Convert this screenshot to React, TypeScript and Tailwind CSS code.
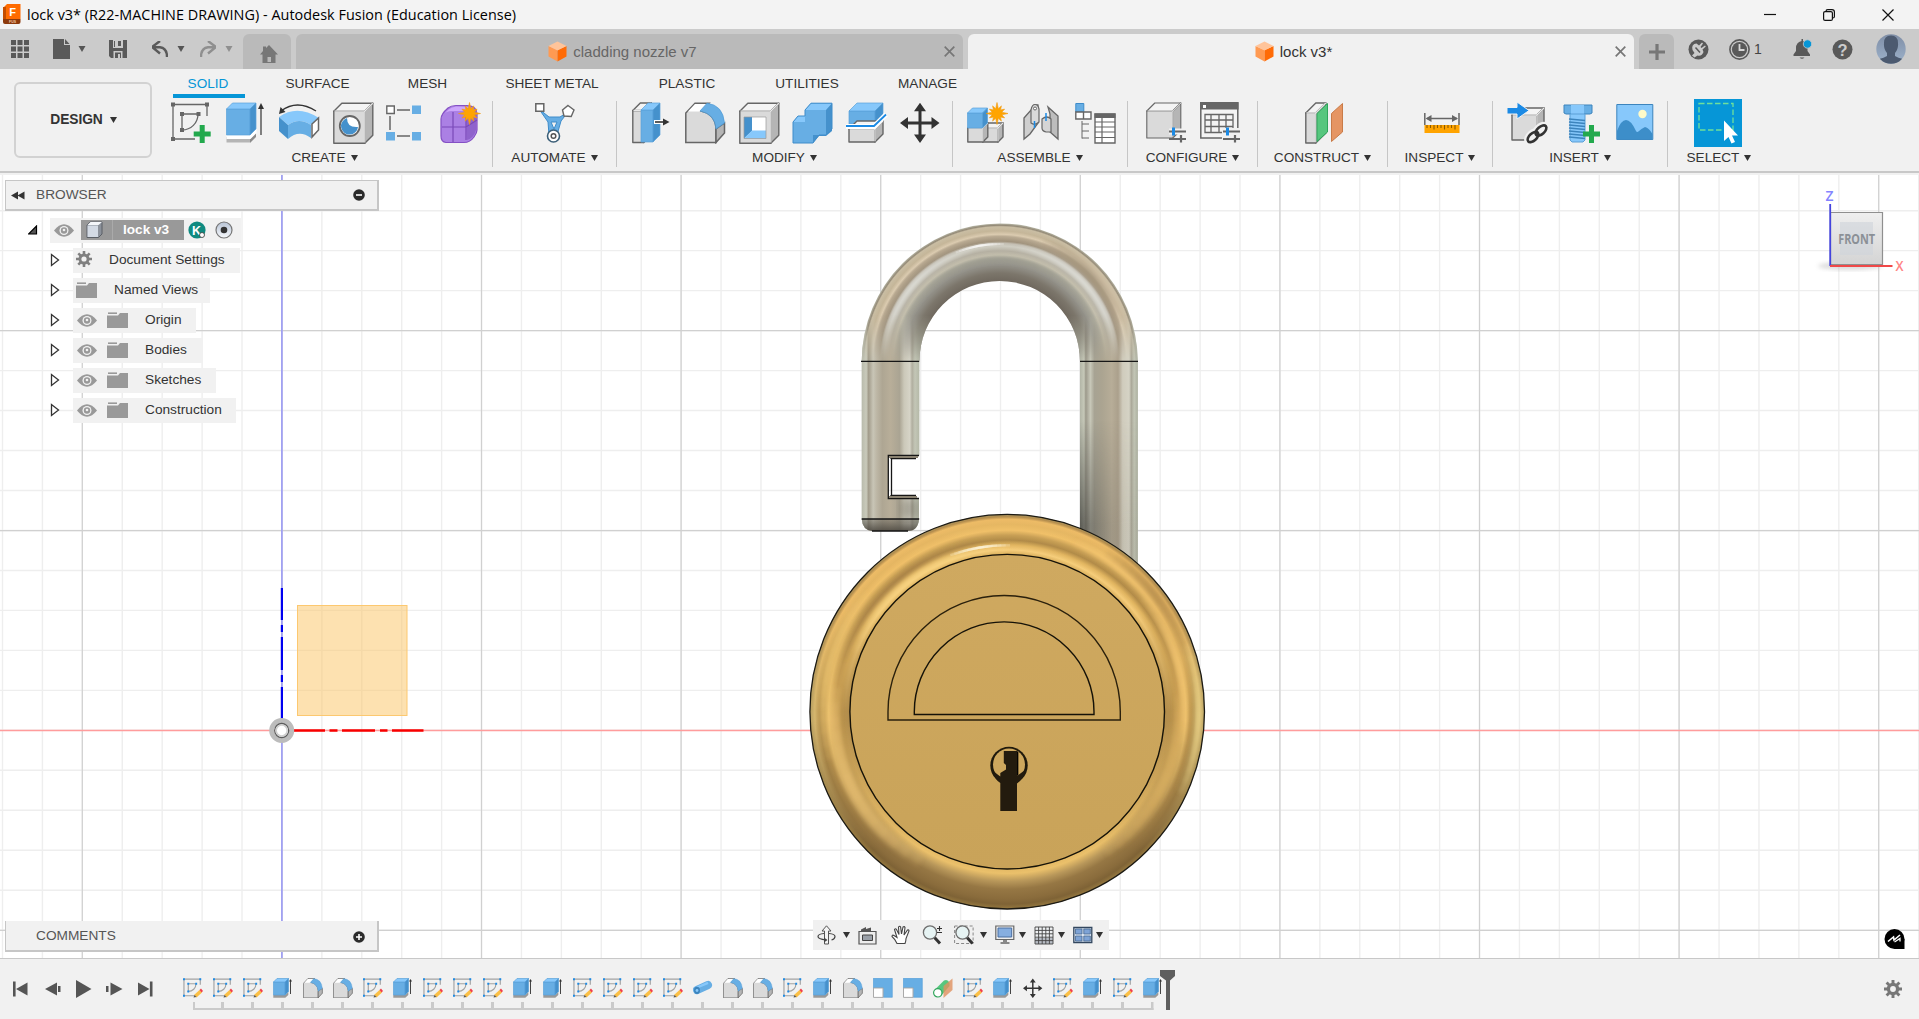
import React from "react";

const Box = ({
  x, y, w, h, d, e = d, c = "gray", sw = 1.4,
}: { x: number; y: number; w: number; h: number; d: number; e?: number; c?: "gray" | "blue" | "white"; sw?: number }) => {
  const p = {
    gray: ["#dadada", "#f4f4f4", "#b5b5b5", "#666"],
    white: ["#f3f3f3", "#ffffff", "#c4c4c4", "#666"],
    blue: ["#67aee4", "#87c8fb", "#4591cc", "#5aa2da"],
  }[c];
  return (
    <g stroke={p[3]} strokeWidth={c === "blue" ? sw * 0.5 : sw} strokeLinejoin="round">
      <path d={`M${x} ${y + e}h${w}v${h}h${-w}z`} fill={p[0]} />
      <path d={`M${x} ${y + e}l${d} ${-e}h${w}l${-d} ${e}z`} fill={p[1]} />
      <path d={`M${x + w} ${y + e}l${d} ${-e}v${h}l${-d} ${e}z`} fill={p[2]} />
      {c !== "blue" && <path d={`M${x + 0.7} ${y + e}H${x + w}V${y + e + h - 0.7}M${x + w} ${y + e}l${d} ${-e}`} stroke="#e8e8e8" strokeWidth={sw * 0.9} fill="none" />}
    </g>
  );
};

const Plus = ({ x, y }: { x: number; y: number }) => (
  <path d={`M${x - 8.5} ${y}h17M${x} ${y - 9}v18`} stroke="#23a94d" strokeWidth="5" />
);
const Star = ({ x, y, r = 10 }: { x: number; y: number; r?: number }) => {
  const pts = Array.from({ length: 24 }, (_, i) => {
    const a = (i * Math.PI) / 12;
    const q = i % 2 ? r * 0.5 : i % 6 === 0 ? r * 1.1 : r * 0.88;
    return `${x + q * Math.sin(a)},${y - q * Math.cos(a)}`;
  }).join(" ");
  return <polygon points={pts} fill="#ffa400" stroke="#f19a10" strokeWidth="0.6" />;
};
const Sliders = ({ x, y }: { x: number; y: number }) => (
  <g strokeWidth="3">
    <path d={`M${x} ${y}h17`} stroke="#f1f1f1" strokeWidth="6" />
    <path d={`M${x} ${y}h17M${x} ${y + 7.5}h17M${x + 12} ${y + 3.5}v7.5`} stroke="#666" strokeWidth="2.2" />
    <path d={`M${x + 4.5} ${y - 4}v8`} stroke="#1b8ae5" />
  </g>
);
const Sk = ({ s = "#666", c = "#666", w = 1.3 }) => (
  <g>
    <path d="M2 2.5H36V14M2 2.5V37H24M11 12H27C27 21 20 28 11 28Z" fill="none" stroke={s} strokeWidth={w} />
    <path d="M0 .5h4v4H0zM34 .5h4v4h-4zM0 35h4v4H0zM9 10h4v4H9zM25.500 10h4v4h-4zM9 26h4v4H9z" fill={c} />
  </g>
);

const icons: Record<string, React.ReactNode> = {
  sketch: (<><Sk /><Plus x={31.2} y={32} /></>),
  extrude: (
    <>
      <path d="M.5 35h23.500v5.500H.5z" fill="#b5b5b5" /><path d="M24 35l6-6v6l-6 6z" fill="#8b8b8b" />
      <path d="M.5 32h24l6-6v5l-6 6H.5z" fill="#fff" />
      <Box x={0.5} y={1} w={23.500} h={26} d={6} c="blue" />
      <path d="M35 33V5" stroke="#333" strokeWidth="1.2" /><path d="M32 7l3-6 3 6z" fill="#333" />
    </>
  ),
  revolve: (
    <>
      <path d="M2 9Q18-3 37 9" fill="none" stroke="#333" strokeWidth="1.400" /><path d="M0 12l1.500-7 5 5z" fill="#333" />
      <path d="M0 15Q18 2 40 16L32 23Q20 15 9 23z" fill="#87c8fb" />
      <path d="M0 15L9 23V37L0 29z" fill="#4591cc" /><path d="M9 23Q20 15 32 23V36Q20 27 9 37z" fill="#67aee4" />
      <path d="M33 22l6.500-6v12l-6.500 7z" fill="#fff" stroke="#666" strokeWidth="1.500" />
    </>
  ),
  hole: (
    <>
      <Box x={0.8} y={1.200} w={31} h={32} d={8} />
      <circle cx="16.800" cy="24" r="10" fill="#fff" stroke="#666" strokeWidth="1.800" />
      <path d="M14 16Q14 26 25 25A8.500 8.500 0 1 1 14 16z" fill="#4591cc" />
    </>
  ),
  pattern: (
    <>
      <path d="M4 8h27M4 8v26M4 34h27" stroke="#666" strokeWidth="1.500" fill="none" />
      <path d="M-1 2h12v12H-1zM24 2h13v12H24zM-1 28h12v12H-1zM24 28h13v12H24z" fill="#f1f1f1" />
      <path d="M.8 4h7.500v7.500H.8z" fill="#fff" stroke="#666" strokeWidth="1.400" />
      <path d="M26 3.500h9v8.500h-9zM0 30h9v8.500H0zM26 30h9v8.500h-9z" fill="#67aee4" />
    </>
  ),
  form: (
    <>
      <path d="M8 6Q11 3.500 16 3.500H27Q37 4 37 12V28Q37 31 34 35Q30 40.500 24 40.500H6Q1 40 1 34V17Q1 12 8 6z" fill="#ab80e4" stroke="#8450c4" strokeWidth="1.200" />
      <path d="M3 13Q6 9 12 9H24L30 5L16 4.500Q11 5 8 8z" fill="#cda6fb" />
      <path d="M26 13L36 8V28Q34 36 27 38z" fill="#8f63cc" />
      <path d="M2 25H26L37 18M13 10V40M26 12V38" stroke="#7a49b8" strokeWidth="1.200" fill="none" />
      <Star x={29.500} y={11.500} />
    </>
  ),
  automate: (
    <>
      <path d="M4 7L14 15H25L33 10L26 19L22 33H14L13 20Z" fill="#67aee4" stroke="#3e8cca" strokeWidth="1" strokeLinejoin="round" />
      <path d="M16 20h6l-3 7z" fill="#f1f1f1" stroke="#3e8cca" />
      <path d="M.8 1.800h8v7.400h-8z" fill="#fff" stroke="#666" strokeWidth="1.500" />
      <path d="M33 3.500l6 4.500-2.800 6.500-7.200-.5-1.500-6z" fill="#fff" stroke="#666" strokeWidth="1.400" />
      <circle cx="18.500" cy="34" r="6" fill="#fff" stroke="#3c5f78" strokeWidth="1.600" /><circle cx="18.500" cy="34" r="2.300" fill="none" stroke="#555" strokeWidth="1.500" />
    </>
  ),
  press: (
    <>
      <Box x={0.8} y={1} w={11} h={32} d={7.500} />
      <Box x={9} y={1} w={12} h={32} d={7} c="blue" />
      <path d="M22 20h10" stroke="#fff" strokeWidth="4" /><path d="M23 20h10" stroke="#333" strokeWidth="1.600" /><path d="M31 16.500l6.500 3.500-6.500 3.500z" fill="#333" />
    </>
  ),
  fillet: (
    <>
      <path d="M.8 40.500V11L10 1.200H24L16 9Q30 12 31 26V40.500z" fill="#dadada" stroke="#666" strokeWidth="1.500" />
      <path d="M1.500 11L10 2H22L15 9.500H3z" fill="#fff" />
      <path d="M31 40.500V27L39.500 21V31z" fill="#b5b5b5" stroke="#666" strokeWidth="1.500" />
      <path d="M15 9L22 1.200Q38 3 39.500 21L31 27Q30 12 15 9z" fill="#67aee4" stroke="#4f9bd6" strokeWidth=".7" />
    </>
  ),
  shell: (
    <>
      <Box x={0.8} y={1.200} w={31} h={32} d={8} />
      <path d="M5 15h22v21H5z" fill="#fff" /><path d="M5 15h8v14l-8 7.500z" fill="#4591cc" /><path d="M5 36.500l8-8h14v8z" fill="#87c8fb" /><path d="M5 15h22v21.500H5z" fill="none" stroke="#999" strokeWidth=".7" />
    </>
  ),
  combine: (
    <>
      <path d="M13 8L19 1.200H40V29L34 34H27L21 41H1V20L6 14H13z" fill="#4591cc" />
      <path d="M13 8L19 1.200H40L34 8zM1 20l5-6h7v6z" fill="#87c8fb" />
      <path d="M13 8H34V33H21V41H1V20H13z" fill="#67aee4" />
      <path d="M13 8L19 1.200H40V27L34 33H27L21 41H1V20L6 14H13z" fill="none" stroke="#3e8cca" />
    </>
  ),
  split: (
    <>
      <Box x={3} y={1} w={26} h={13} d={8} c="blue" />
      <Box x={3} y={19} w={26} h={13} d={8} />
      <path d="M0 24.500H28L40 12.500" stroke="#fff" strokeWidth="5" fill="none" /><path d="M0 24H28L40 12.500" stroke="#1b8ae5" strokeWidth="1.800" fill="none" />
    </>
  ),
  move: (
    <>
      <path d="M20 5V37M4 21H36" stroke="#333" strokeWidth="3" />
      <path d="M20 .8l6 8.500H14zM20 41l6-8.500H14zM0 21l8-6v12zM39.500 21l-8-6v12z" fill="#333" />
    </>
  ),
  newcomp: (
    <>
      <Box x={16} y={21} w={15} h={14} d={5} />
      <Box x={0.8} y={21} w={15} h={14} d={5} />
      <Box x={0.5} y={6} w={15} h={15} d={5} c="blue" />
      <Star x={30} y={11.500} />
    </>
  ),
  joint: (
    <>
      <path d="M1 16L9 7Q10 2 15 3V21L7 32L1 37z" fill="#cfcfcf" stroke="#666" strokeWidth="1.300" />
      <path d="M8 8Q9 2.500 12 2.500T16 7V20Q12 24 8 21z" fill="#d9d9d9" stroke="#666" strokeWidth="1.200" /><circle cx="12" cy="6.500" r="1.500" fill="#fff" stroke="#666" />
      <path d="M25 5L35 14V37L27 30V12z" fill="#bdbdbd" stroke="#666" strokeWidth="1.300" />
      <path d="M19 17Q24 13 28 17V30H23Q19 29 19 26z" fill="#d5d5d5" stroke="#666" strokeWidth="1.200" />
      <path d="M11.500 19v7M23 11v8" stroke="#1b8ae5" strokeWidth="1.500" />
    </>
  ),
  table: (
    <>
      <path d="M.8 1.500h8v8.500h-8z" fill="#67aee4" stroke="#3e8cca" /><path d="M.8 10h7.700v7H.8zM8.500 10H16v7H8.500z" fill="#fff" stroke="#666" strokeWidth="1.400" />
      <path d="M7 19V36.500M7 22h7M7 29h7M7 36h7" stroke="#666" fill="none" strokeWidth="1" />
      <path d="M20 12h20v29H20z" fill="#fff" stroke="#666" strokeWidth="1.400" /><path d="M19.500 11.500h21v4.500h-21z" fill="#666" />
      <path d="M20 20h20M20 25h20M20 30h20M20 35.500h20M27 16v25" stroke="#666" strokeWidth="1.200" />
    </>
  ),
  config: (<><Box x={0.8} y={1} w={26} h={27} d={8} sw={1.100} /><Sliders x={23} y={29.500} /></>),
  configtable: (
    <>
      <path d="M.8 1h37v35H.8z" fill="#f4f4f4" stroke="#666" strokeWidth="1.500" /><path d="M0 0h38.500v7.500H0z" fill="#666" /><path d="M3 3h3v3H3z" fill="#fff" />
      <path d="M5 12.500h28v18H5zM5 18h28M5 24.500h28M11 12.500v18M19 12.500v18M26 12.500v18" fill="none" stroke="#666" strokeWidth="1.300" />
      <path d="M22 26h18v12H22z" fill="#f1f1f1" /><Sliders x={23} y={29.500} />
    </>
  ),
  construct: (
    <>
      <Box x={0.8} y={1} w={10} h={30} d={10} />
      <path d="M12 11.500L22.500 1.500V30L12 39.500z" fill="#56c67e" stroke="#2fa55b" />
      <path d="M23.500 0L26 8.500V42H23.500z" fill="#f1f1f1" />
      <path d="M26.500 11.500L37.500 1.500V30L26.500 39.500z" fill="#e59563" stroke="#c97b48" />
    </>
  ),
  inspect: (
    <>
      <path d="M.8 11v12M35 11v12" stroke="#666" strokeWidth="1.500" /><path d="M3 16.500h30" stroke="#666" strokeWidth="1.500" /><path d="M1.500 16.500l6-3.500v7zM34 16.500l-6-3.500v7z" fill="#666" />
      <path d="M.5 23h35v8H.5z" fill="#ffa400" /><path d="M3 23v3M6.500 23v3M10 23v4.500M13.500 23v3M17 23v3M20.500 23v4.500M24 23v3M27.500 23v3M31 23v4.500" stroke="#8b5a00" strokeWidth="1.100" />
    </>
  ),
  derive: (
    <>
      <Box x={5} y={6} w={25} h={25} d={7} />
      <path d="M0 5.500h10V0l12 8.500L10 17v-5H0z" fill="#1b8ae5" stroke="#f1f1f1" strokeWidth="1" />
      <g fill="none" stroke="#f1f1f1" strokeWidth="7"><ellipse cx="26" cy="35" rx="6.500" ry="3.600" transform="rotate(-42 26 35)" /><ellipse cx="34" cy="28.500" rx="6.500" ry="3.600" transform="rotate(-42 34 28.500)" /></g>
      <g fill="none" stroke="#333" strokeWidth="2.600"><ellipse cx="26" cy="35" rx="6.500" ry="3.600" transform="rotate(-42 26 35)" /><ellipse cx="34" cy="28.500" rx="6.500" ry="3.600" transform="rotate(-42 34 28.500)" /></g>
    </>
  ),
  bolt: (
    <>
      <path d="M1 3h28v8l-2 1H3l-2-1z" fill="#67aee4" stroke="#3c84bd" /><path d="M8 3h13v9H8z" fill="#87c8fb" />
      <path d="M7 12h15v26l-2 2H9l-2-2z" fill="#87c8fb" stroke="#5a9fd6" />
      <path d="M6 17l16 1.500M6 20l16 1.500M6 23l16 1.500M6 26l16 1.500M6 29l16 1.500M6 32l16 1.500M6 35l16 1.500" stroke="#3c84bd" strokeWidth="1.400" />
      <Plus x={28.500} y={32} />
    </>
  ),
  image: (
    <>
      <path d="M.8 2.500h36v35H.8z" fill="#87c8fb" stroke="#3c84bd" strokeWidth="1" />
      <path d="M1 29Q5 18 10 18T20 29Q21 31 23 29T29 25Q33 26 36.500 32V37.500H1z" fill="#3d8ec9" />
      <circle cx="26.500" cy="12" r="4.200" fill="#fffbc9" />
    </>
  ),
};

const Caret = ({ className = "" }) => (
  <svg width="7" height="6" viewBox="0 0 7 6" className={className}><path d="M0 0h7L3.500 6z" fill="currentColor" /></svg>
);

const groups: { name: string; w: string; icons: [string, string][] }[] = [
  { name: "CREATE", w: "w-[336px]", icons: [["sketch", "ml-[14px]"], ["extrude", "ml-[13px]"], ["revolve", "ml-[11px]"], ["hole", "ml-[12px]"], ["pattern", "ml-[11px]"], ["form", "ml-[12px]"]] },
  { name: "AUTOMATE", w: "w-[124px]", icons: [["automate", "ml-[42px]"]] },
  { name: "MODIFY", w: "w-[336px]", icons: [["press", "ml-[15px]"], ["fillet", "ml-[11px]"], ["shell", "ml-[12px]"], ["combine", "ml-[11px]"], ["split", "ml-[12px]"], ["move", "ml-[12px]"]] },
  { name: "ASSEMBLE", w: "w-[175px]", icons: [["newcomp", "ml-[14px]"], ["joint", "ml-[14px]"], ["table", "ml-[10px]"]] },
  { name: "CONFIGURE", w: "w-[130px]", icons: [["config", "ml-[18px]"], ["configtable", "ml-[12px]"]] },
  { name: "CONSTRUCT", w: "w-[130px]", icons: [["construct", "ml-[47px]"]] },
  { name: "INSPECT", w: "w-[105px]", icons: [["inspect", "ml-[36px]"]] },
  { name: "INSERT", w: "w-[175px]", icons: [["derive", "ml-[14px]"], ["bolt", "ml-[14px]"], ["image", "ml-[11px]"]] },
];

const Label = ({ t }: { t: string }) => (
  <div className="flex items-center justify-center gap-[5px] whitespace-nowrap text-[13.6px] leading-4 text-[#333]">
    <span>{t}</span><Caret />
  </div>
);

const TabCube = () => (
  <svg width="19" height="21" viewBox="0 0 19 21" className="shrink-0">
    <path d="M.5 5L9.500 9V20.500L.5 15.500z" fill="#ff9a52" /><path d="M9.500 9L18.500 5V15.500L9.500 20.500z" fill="#ff6b06" /><path d="M.5 5L9.500 .5L18.500 5L9.500 9.500z" fill="#ffc49a" />
  </svg>
);
const Cross = ({ c }: { c: string }) => (
  <svg width="11" height="11" viewBox="0 0 11 11"><path d="M.7.7l9.600 9.600M10.300.7L.7 10.300" stroke={c} strokeWidth="1.700" /></svg>
);

const TitleBar = () => (
  <header className="flex h-[29px] shrink-0 items-center bg-[#f3f3f3] pl-[3px] pr-[25px]">
    <svg width="18" height="21" viewBox="0 0 18 21">
      <path d="M1 3L4 0H17.500V15H1z" fill="#ff6b00" /><path d="M0 3h3v15H0z" fill="#c44d00" /><path d="M0 15h17.500v3q0 2-2 2H2q-2 0-2-2z" fill="#8c3a0c" />
      <text x="9.500" y="11.500" fontSize="11" fontWeight="700" fill="#fff" textAnchor="middle" fontFamily="Liberation Sans, sans-serif">F</text>
      <text x="9.500" y="19" fontSize="3.500" fontWeight="700" fill="#f5c9a8" textAnchor="middle" fontFamily="Liberation Sans, sans-serif">FUS</text>
    </svg>
    <h1 className="ml-[6px] whitespace-nowrap font-['Open_Sans',sans-serif] text-[14.4px] leading-[18px] tracking-[0.03px] text-black">lock v3* (R22-MACHINE DRAWING) - Autodesk Fusion (Education License)</h1>
    <div className="ml-auto flex items-center gap-[47px]">
      <svg width="12" height="12"><path d="M0 5.500h12" stroke="#111" strokeWidth="1.200" /></svg>
      <svg width="12" height="12" viewBox="0 0 12 12"><rect x=".6" y="2.600" width="8.800" height="8.800" rx="1.500" fill="none" stroke="#111" strokeWidth="1.200" /><path d="M3 2.200Q3 .6 4.800.6H9Q11.400.6 11.400 3V7.500Q11.400 9 9.800 9" fill="none" stroke="#111" strokeWidth="1.200" /></svg>
      <svg width="12" height="12"><path d="M.5.5l11 11M11.500.5l-11 11" stroke="#111" strokeWidth="1.200" /></svg>
    </div>
  </header>
);

const DocBar = () => (
  <div className="flex h-[40px] shrink-0 items-end bg-[#cbcbcb] text-[15px]">
    <div className="flex h-[40px] w-[243px] items-center pl-[11px] text-[#555]">
      <svg width="18" height="18" viewBox="0 0 18 18"><path d="M0 0h5v5H0zM6.500 0h5v5h-5zM13 0h5v5h-5zM0 6.500h5v5H0zM6.500 6.500h5v5h-5zM13 6.500h5v5h-5zM0 13h5v5H0zM6.500 13h5v5h-5zM13 13h5v5h-5z" fill="#595959" /></svg>
      <svg className="ml-[24px]" width="17" height="20" viewBox="0 0 17 20"><path d="M0 0h11v6h6v14H0z" fill="#5a5a5a" /><path d="M12 0l4.500 5H12z" fill="#5a5a5a" /></svg>
      <Caret className="ml-[8px] w-[8px]" />
      <svg className="ml-[23px]" width="18" height="18" viewBox="0 0 18 18"><path d="M0 0h18v18H2L0 16z" fill="#5a5a5a" /><path d="M4 0h10v8H4zM4.500 11h9v7h-9z" fill="#cbcbcb" /><path d="M9 1h3v5H9zM6 12.500h6V18H6zM5 1h1v6H5z" fill="#5a5a5a" /><path d="M9 14h2v4H9z" fill="#cbcbcb" /></svg>
      <svg className="ml-[25px]" width="16" height="17" viewBox="0 0 16 17"><path d="M8 0L0 6l8 6.500M1 6.200H8Q15 7 15 16" fill="none" stroke="#5a5a5a" strokeWidth="2.400" /></svg>
      <Caret className="ml-[9px] w-[8px]" />
      <svg className="ml-[15px]" width="16" height="17" viewBox="0 0 16 17"><path d="M8 0l8 6-8 6.500M15 6.200H8Q1 7 1 16" fill="none" stroke="#8f8f8f" strokeWidth="2.400" /></svg>
      <Caret className="ml-[9px] w-[8px] text-[#8f8f8f]" />
    </div>
    <div className="flex h-[35px] w-[48px] items-end justify-center rounded-t-[6px] bg-[#bababa] pb-[6px] pl-[3px]">
      <svg width="18" height="18" viewBox="0 0 18 18"><path d="M9 0L18 9.500H15.500V18H11V12H7.500V18H2.500V9.500H0L3 6V1.500h3V3z" fill="#777" /><path d="M4 17.500h10" stroke="#777" /></svg>
    </div>
    <div className="ml-[5px] flex h-[35px] w-[667px] items-center rounded-t-[6px] bg-[#bababa] pr-[8px] text-[#666]">
      <div className="flex w-full items-center justify-center gap-[6px] pl-[5px]"><TabCube /><span className="pt-px">cladding nozzle v7</span></div>
      <div><Cross c="#777" /></div>
    </div>
    <div className="ml-[5px] flex h-[35px] w-[666px] items-center rounded-t-[6px] bg-[#f1f1f1] pr-[8px] text-[#333]">
      <div className="flex w-full items-center justify-center gap-[6px] pl-[4px]"><TabCube /><span className="pt-px">lock v3*</span></div>
      <div><Cross c="#777" /></div>
    </div>
    <div className="ml-[5px] flex h-[35px] w-[35px] items-center justify-center rounded-t-[6px] bg-[#bababa]">
      <svg width="16" height="16"><path d="M8 0v16M0 8h16" stroke="#777" strokeWidth="3.200" /></svg>
    </div>
    <div className="flex h-[40px] w-[245px] items-center pl-[14px]">
      <svg width="21" height="21" viewBox="0 0 21 21"><circle cx="10.500" cy="10.500" r="10" fill="#595959" /><path d="M4.500 11Q3 5 8.500 4.500L11 6.500 14 3.500 15 4.500 12.500 8 13.500 9 17 6.500 17.800 7.500 14.500 10.500 15.500 13Q14 17.500 9.500 16.500L6.500 18.500 4 16.500 6.500 14z" fill="#cbcbcb" /><path d="M7.500 8.500l4.500 5" stroke="#595959" strokeWidth="1.500" /></svg>
      <svg className="ml-[20px]" width="21" height="21" viewBox="0 0 21 21"><circle cx="10.500" cy="10.500" r="9.600" fill="none" stroke="#595959" strokeWidth="1.600" /><circle cx="10.500" cy="10.500" r="7.600" fill="#595959" /><path d="M10.500 5v6h5" stroke="#d6d6d6" strokeWidth="1.800" fill="none" /></svg>
      <span className="ml-[4px] w-[8px] text-[14px] text-[#444]">1</span>
      <svg className="ml-[31px]" width="21" height="21" viewBox="0 0 21 21"><path d="M8.500 0V2Q3 3.500 3 9V12L.5 15.500V17H17V15.500L14.500 12V9Q14.500 3.500 10 2V0zM6.500 18.500h5Q9 21 6.500 18.500z" fill="#595959" /><circle cx="14.500" cy="5" r="4.200" fill="#0696d7" stroke="#cbcbcb" strokeWidth=".8" /></svg>
      <svg className="ml-[18px]" width="21" height="21" viewBox="0 0 21 21"><circle cx="10.500" cy="10.500" r="10" fill="#595959" /><text x="10.500" y="16.500" fontSize="16.500" fontWeight="700" textAnchor="middle" fill="#cbcbcb" fontFamily="Liberation Sans, sans-serif">?</text></svg>
      <svg className="ml-[23px]" width="30" height="30" viewBox="0 0 30 30"><defs><linearGradient id="av" x1="0" y1="0" x2="0" y2="1"><stop offset="0" stopColor="#7f8ea6" /><stop offset="1" stopColor="#9db2cb" /></linearGradient><clipPath id="avc"><circle cx="15" cy="15" r="14.700" /></clipPath></defs><circle cx="15" cy="15" r="14.700" fill="url(#av)" /><path clipPath="url(#avc)" d="M15 1.500Q22 1.500 22 9Q22.500 15 19 19V22Q22 24 27 25V31H3V25Q8 24 11 22V19Q7.500 15 8 9Q8 1.500 15 1.500z" fill="#4c5a70" /></svg>
    </div>
  </div>
);

const tabs: [string, string][] = [["SURFACE", "ml-[40px] w-[65px]"], ["MESH", "ml-[58px] w-[39px]"], ["SHEET METAL", "ml-[58px] w-[94px]"], ["PLASTIC", "ml-[59px] w-[58px]"], ["UTILITIES", "ml-[59px] w-[64px]"], ["MANAGE", "ml-[59px] w-[59px]"]];

const Ribbon = () => (
  <div className="flex h-[104px] shrink-0 border-b-2 border-[#c8c8c8] bg-[#f1f1f1]">
    <div className="w-[157px] pl-[14px] pt-[13px]">
      <button className="flex h-[76px] w-[138px] items-center justify-center gap-[7px] rounded-[6px] border-2 border-[#d2d2d2] pl-px text-[13.800px] font-bold tracking-[-0.1px] text-[#333]">DESIGN <Caret /></button>
    </div>
    <div className="flex flex-col">
      <nav className="flex h-[32px] items-start pl-[16px] text-[13.6px] text-[#333]">
        <div className="flex h-[29px] w-[72px] justify-center border-b-[4px] border-[#0696d7] pr-[2px] pt-[6px] leading-[18px] text-[#0696d7]">SOLID</div>
        {tabs.map(([t, m]) => <div key={t} className={`${m} flex justify-center whitespace-nowrap pt-[6px] leading-[18px]`}>{t}</div>)}
      </nav>
      <div className="flex h-[66px]">
        {groups.map((g) => (
          <section key={g.name} className={`${g.w} flex shrink-0 flex-col border-r border-[#c6c6c6]`}>
            <div className="flex h-[49px] pt-px">
              {g.icons.map(([k, m]) => <svg key={k} className={`${m} shrink-0`} width="42" height="42" viewBox="0 0 42 42">{icons[k]}</svg>)}
            </div>
            <Label t={g.name} />
          </section>
        ))}
        <section className="flex w-[102px] flex-col">
          <div className="flex h-[49px] justify-center pr-[3px]">
            <svg className="-mt-[2px]" width="48" height="48" viewBox="0 0 48 48">
              <path d="M0 0h48v48H0z" fill="#0696d7" /><path d="M5 4.500h34v26.500H5z" fill="none" stroke="#6fe09b" strokeWidth="1.300" strokeDasharray="5.500 2.500" />
              <path d="M30 21.500V42l4.500-4 3 6.500 3.500-1.500-3-6.500h6z" fill="#fff" />
            </svg>
          </div>
          <Label t="SELECT" />
        </section>
      </div>
    </div>
  </div>
);

const Eye = () => (
  <svg width="20" height="13" viewBox="0 0 20 13"><path d="M0 6.500Q10-6 20 6.500Q10 19 0 6.500z" fill="#999" /><circle cx="10" cy="6.500" r="4.500" fill="#f1f1f1" /><circle cx="10" cy="6.500" r="3.200" fill="#999" /><circle cx="10" cy="6" r="1.300" fill="#f1f1f1" /></svg>
);
const Folder = () => (
  <svg width="21" height="16" viewBox="0 0 21 16"><path d="M0 3.500h11L13 1h8v15H0z" fill="#999" /><path d="M1 1.200h9" stroke="#999" strokeWidth="1.600" /></svg>
);
const Gear = ({ size, c }: { size: number; c: string }) => (
  <svg width={size} height={size} viewBox="0 0 16 16"><path d="M8 0v16M0 8h16M2.300 2.300l11.400 11.400M13.700 2.300L2.300 13.700" stroke={c} strokeWidth="2.600" /><circle cx="8" cy="8" r="5.500" fill={c} /><circle cx="8" cy="8" r="2.600" fill="#f1f1f1" /></svg>
);
const rows: { t: string; w: string; kind: "gear" | "view" | "eye" }[] = [
  { t: "Document Settings", w: "w-[167px]", kind: "gear" },
  { t: "Named Views", w: "w-[137px]", kind: "view" },
  { t: "Origin", w: "w-[123px]", kind: "eye" },
  { t: "Bodies", w: "w-[129px]", kind: "eye" },
  { t: "Sketches", w: "w-[143px]", kind: "eye" },
  { t: "Construction", w: "w-[163px]", kind: "eye" },
];

const Browser = () => (
  <aside className="absolute left-0 top-[5px] flex flex-col text-[#333]">
    <div className="ml-[5px] flex h-[31px] w-[374px] items-center border border-b-2 border-r-2 border-[#c6c6c6] bg-[#f1f1f1] pl-[5px] pr-[12px] text-[13.700px] text-[#555]">
      <svg width="14" height="9" viewBox="0 0 14 9"><path d="M7 .5v8L0 4.500zM13.500.5v8l-7-4z" fill="#333" /></svg>
      <span className="ml-[11px]">BROWSER</span>
      <svg className="ml-auto" width="12" height="12"><circle cx="6" cy="6" r="5.800" fill="#2b2b2b" /><path d="M3 6h6" stroke="#fff" strokeWidth="1.600" /></svg>
    </div>
    <div className="mt-[4px] flex h-[30px] items-center pl-[28px]">
      <svg width="10" height="10" viewBox="0 0 10 10"><path d="M8.500 1v8h-8z" fill="#555" stroke="#000" strokeWidth="1.200" /></svg>
      <div className="ml-[12px] flex h-[25px] w-[191px] items-center bg-[#f1f1f1] pl-[4px]">
        <Eye />
        <div className="ml-[7px] flex h-[20px] w-[103px] items-center bg-[#999] pl-[5px]">
          <svg width="18" height="18" viewBox="0 0 18 18"><path d="M1 4L4 1H16V13L12.500 16.500H1z" fill="#8b919a" stroke="#5a5f66" /><path d="M1.500 4.500H12V16H1.500z" fill="#d3dae4" /><path d="M1.500 4L4.500 1H16L12.500 4z" fill="#f4f6f9" /></svg>
          <i className="ml-[8px] h-[20px] w-px bg-[#aaa]" />
          <b className="ml-[10px] whitespace-nowrap text-[13.600px] text-white">lock v3</b>
        </div>
        <svg className="ml-[4px]" width="18" height="18" viewBox="0 0 18 18"><circle cx="9" cy="9" r="8.600" fill="#0f8a80" /><text x="8.500" y="13.500" fontSize="12.500" fontWeight="700" fill="#fff" textAnchor="middle" fontFamily="Liberation Sans, sans-serif">K</text><circle cx="14" cy="14" r="2.500" fill="#fff" stroke="#333" strokeWidth=".8" /></svg>
        <svg className="ml-[9px]" width="18" height="18" viewBox="0 0 18 18"><defs><linearGradient id="rd" x1="0" y1="0" x2="0" y2="1"><stop offset="0" stopColor="#b8c4d6" /><stop offset="1" stopColor="#f6f8fb" /></linearGradient></defs><circle cx="9" cy="9" r="8" fill="url(#rd)" stroke="#777" strokeWidth="1.200" /><circle cx="9" cy="9" r="3.300" fill="#333" /></svg>
      </div>
    </div>
    {rows.map((r) => (
      <div key={r.t} className="flex h-[30px] items-center pl-[50px]">
        <svg width="10" height="14" viewBox="0 0 10 14"><path d="M1.500 1.500v11L8.500 7z" fill="#fff" stroke="#333" strokeWidth="1.300" /></svg>
        <div className={`${r.w} ml-[13px] flex h-[25px] items-center whitespace-nowrap bg-[#f1f1f1] text-[13.700px]`}>
          {r.kind === "gear" && <><span className="-mt-[2px] ml-[3px]"><Gear size={16} c="#808080" /></span><span className="ml-[17px]">{r.t}</span></>}
          {r.kind === "view" && <><span className="ml-[3px]"><Folder /></span><span className="ml-[17px]">{r.t}</span></>}
          {r.kind === "eye" && <><span className="ml-[4px]"><Eye /></span><span className="ml-[10px]"><Folder /></span><span className="ml-[17px]">{r.t}</span></>}
        </div>
      </div>
    ))}
  </aside>
);

const range = (n: number) => Array.from({ length: n }, (_, i) => i);
const shackle = "M861.700 361.300A138 138 0 0 1 1137.700 361.300V570H1080V361.300A80.300 80.300 0 0 0 919.400 361.300V455.500H888V498.500H919V519Q918 531 908 531H872Q862.500 530 861.700 519z";
const arc = (r: number, a0: number, a1: number, cx: number, cy: number) => {
  const p = (a: number) => `${cx + r * Math.sin((a * Math.PI) / 180)} ${cy - r * Math.cos((a * Math.PI) / 180)}`;
  return `M${p(a0)}A${r} ${r} 0 0 1 ${p(a1)}`;
};

/* A highlight whose colour fades out towards both ends of its sweep. */
const Gloss = ({ r, a0, a1, cx, cy, w, c, o }: { r: number; a0: number; a1: number; cx: number; cy: number; w: number; c: string; o: number }) => {
  const n = 7;
  const half = (a1 - a0) / 2;
  return (
    <g stroke={c} strokeWidth={w} fill="none">
      {range(n).map((i) => {
        const k = (half * (n - i)) / n;
        const m = (a0 + a1) / 2;
        return <path key={i} d={arc(r, m - k, m + k, cx, cy)} opacity={(o / n) * 1.5} />;
      })}
    </g>
  );
};

const Scene = () => (
  <svg className="block" width="1919" height="783" viewBox="0 175 1919 783" fontFamily="Liberation Sans, sans-serif">
    <defs>
      <radialGradient id="arcG" gradientUnits="userSpaceOnUse" cx="999.700" cy="361.300" r="138">
        <stop offset=".58" stopColor="#6f685e" /><stop offset=".64" stopColor="#7c766b" /><stop offset=".7" stopColor="#94928a" /><stop offset=".75" stopColor="#aeac9e" /><stop offset=".77" stopColor="#c5c0ae" /><stop offset=".8" stopColor="#b5b0a2" /><stop offset=".835" stopColor="#cfcdc2" /><stop offset=".855" stopColor="#c4bfb3" /><stop offset=".87" stopColor="#a0927c" /><stop offset=".905" stopColor="#b9aa92" /><stop offset=".92" stopColor="#dbcbb0" /><stop offset=".945" stopColor="#c5b699" /><stop offset=".975" stopColor="#c9bda3" /><stop offset=".985" stopColor="#948a77" /><stop offset="1" stopColor="#b9b9a9" />
      </radialGradient>
      <linearGradient id="legL" gradientUnits="userSpaceOnUse" x1="861.700" x2="919" y1="0" y2="0">
        <stop offset="0" stopColor="#b9bbac" /><stop offset=".08" stopColor="#c9cabb" /><stop offset=".12" stopColor="#a29c8b" /><stop offset=".2" stopColor="#c8c5b6" /><stop offset=".26" stopColor="#bdb7a6" /><stop offset=".36" stopColor="#aea693" /><stop offset=".5" stopColor="#b8ae99" /><stop offset=".66" stopColor="#aaa493" /><stop offset=".74" stopColor="#cbc8b9" /><stop offset=".84" stopColor="#d6d4c7" /><stop offset=".88" stopColor="#b0ae9f" /><stop offset=".93" stopColor="#c3c6b6" /><stop offset="1" stopColor="#b6baa9" />
      </linearGradient>
      <linearGradient id="legR" gradientUnits="userSpaceOnUse" x1="1080" x2="1137.700" y1="0" y2="0">
        <stop offset="0" stopColor="#b3b6a7" /><stop offset=".07" stopColor="#c6c8b8" /><stop offset=".1" stopColor="#9c998b" /><stop offset=".18" stopColor="#c8c8b9" /><stop offset=".25" stopColor="#a7a393" /><stop offset=".38" stopColor="#aba491" /><stop offset=".55" stopColor="#b7ad98" /><stop offset=".66" stopColor="#aba08c" /><stop offset=".74" stopColor="#d0ccbd" /><stop offset=".85" stopColor="#d5d3c5" /><stop offset=".89" stopColor="#aaa899" /><stop offset=".94" stopColor="#c2c5b5" /><stop offset="1" stopColor="#aeb2a2" />
      </linearGradient>
      <linearGradient id="fadeD" gradientUnits="userSpaceOnUse" x1="0" x2="0" y1="315" y2="361"><stop offset="0" stopColor="#000" /><stop offset="1" stopColor="#fff" /></linearGradient>
      <mask id="legMask"><rect x="850" y="200" width="300" height="380" fill="url(#fadeD)" /></mask>
      <linearGradient id="shR" gradientUnits="userSpaceOnUse" x1="1080" x2="1125" y1="0" y2="0"><stop offset="0" stopColor="#3d3c38" stopOpacity=".75" /><stop offset=".35" stopColor="#5d5b54" stopOpacity=".5" /><stop offset="1" stopColor="#776f60" stopOpacity=".12" /></linearGradient>
      <linearGradient id="shM" gradientUnits="userSpaceOnUse" x1="0" x2="0" y1="420" y2="525"><stop offset="0" stopColor="#000" /><stop offset="1" stopColor="#fff" /></linearGradient>
      <mask id="shMask"><rect x="1070" y="400" width="80" height="180" fill="url(#shM)" /></mask>
      <linearGradient id="tip" x1="0" x2="0" y1="0" y2="1"><stop offset="0" stopColor="#55514a" stopOpacity=".35" /><stop offset="1" stopColor="#46423b" stopOpacity=".9" /></linearGradient>
      <radialGradient id="ringT" gradientUnits="userSpaceOnUse" cx="1007.200" cy="711.700" r="197.300">
        <stop offset=".79" stopColor="#cda351" /><stop offset=".82" stopColor="#f8cf7c" /><stop offset=".845" stopColor="#e2b661" /><stop offset=".87" stopColor="#b08a48" /><stop offset=".895" stopColor="#c79f55" /><stop offset=".92" stopColor="#f0c069" /><stop offset=".95" stopColor="#e6b763" /><stop offset=".975" stopColor="#edbb66" /><stop offset=".988" stopColor="#b58e4e" /><stop offset="1" stopColor="#a8935c" />
      </radialGradient>
      <radialGradient id="ringS" gradientUnits="userSpaceOnUse" cx="1007.200" cy="711.700" r="197.300">
        <stop offset=".79" stopColor="#b08c4d" /><stop offset=".84" stopColor="#b9924c" /><stop offset=".87" stopColor="#cfa356" /><stop offset=".905" stopColor="#edc26d" /><stop offset=".925" stopColor="#c59d53" /><stop offset=".95" stopColor="#b08d4b" /><stop offset=".975" stopColor="#d6b76f" /><stop offset="1" stopColor="#b59e60" />
      </radialGradient>
      <radialGradient id="ringB" gradientUnits="userSpaceOnUse" cx="1007.200" cy="711.700" r="197.300">
        <stop offset=".79" stopColor="#e3b864" /><stop offset=".82" stopColor="#eac06b" /><stop offset=".86" stopColor="#b8975a" /><stop offset=".9" stopColor="#967744" /><stop offset=".95" stopColor="#8a6c3c" /><stop offset=".975" stopColor="#7f6336" /><stop offset="1" stopColor="#96793f" />
      </radialGradient>
      <linearGradient id="mt" gradientUnits="userSpaceOnUse" x1="0" x2="0" y1="515" y2="909"><stop offset="0" stopColor="#fff" /><stop offset=".25" stopColor="#eee" /><stop offset=".5" stopColor="#000" /></linearGradient>
      <linearGradient id="mb" gradientUnits="userSpaceOnUse" x1="0" x2="0" y1="515" y2="909"><stop offset=".52" stopColor="#000" /><stop offset=".85" stopColor="#fff" /></linearGradient>
      <mask id="mT"><rect x="800" y="500" width="420" height="420" fill="url(#mt)" /></mask>
      <mask id="mB"><rect x="800" y="500" width="420" height="420" fill="url(#mb)" /></mask>
      <filter id="b05" x="-20%" y="-50%" width="140%" height="200%"><feGaussianBlur stdDeviation=".6" /></filter>
      <filter id="b1" x="-20%" y="-20%" width="140%" height="140%"><feGaussianBlur stdDeviation="2" /></filter>
      <filter id="b3" x="-20%" y="-20%" width="140%" height="140%"><feGaussianBlur stdDeviation="4" /></filter>
      <linearGradient id="face" x1="0" x2="0" y1="0" y2="1"><stop offset="0" stopColor="#cfa960" /><stop offset="1" stopColor="#c9a359" /></linearGradient>
      <linearGradient id="vc" x1="0" x2="0" y1="0" y2="1"><stop offset="0" stopColor="#efefef" /><stop offset="1" stopColor="#d4d4d4" /></linearGradient>
      <clipPath id="shClip"><path d={shackle} /></clipPath>
      <clipPath id="disc"><circle cx="1007.200" cy="711.700" r="197.300" /></clipPath>
    </defs>
    <rect y="175" width="1919" height="783" fill="#fff" />
    <g stroke="#eeeeee" strokeWidth="1.400">
      {range(49).map((i) => <path key={i} d={`M${2.500 + i * 39.920} 175v783`} />)}
      {range(20).map((i) => <path key={i} d={`M0 ${210.700 + i * 39.970}h1919`} />)}
    </g>
    <g stroke="#d0d0d0" strokeWidth="1.200">
      {range(10).map((i) => <path key={i} d={`M${82.300 + i * 199.600} 175v783`} />)}
      {[330.700, 530.700, 930.300].map((y) => <path key={y} d={`M0 ${y}h1919`} />)}
    </g>
    <path d="M281.900 175V958" stroke="#9b9bf5" strokeWidth="1.600" />
    <path d="M0 730.500H1919" stroke="#ff9c9c" strokeWidth="1.500" />
    <rect x="297.500" y="605.500" width="109.500" height="110" fill="#fbc361" fillOpacity=".5" stroke="#fcc870" strokeWidth="1" />
    <path d="M281.900 588V620M281.900 625v7M281.900 637v33M281.900 675v7M281.900 687v34" stroke="#0000f0" strokeWidth="2.200" />
    <path d="M291 730.500h34M329.500 730.500h8M342 730.500h33M380 730.500h7.500M392 730.500h31.500" stroke="#f80000" strokeWidth="2.400" />
    <circle cx="281.700" cy="730.500" r="10" fill="none" stroke="#bcbcbc" strokeWidth="5" /><circle cx="281.700" cy="730.500" r="7" fill="#fff" stroke="#5c5c5c" strokeWidth="1.300" /><circle cx="281.700" cy="730.500" r="5.500" fill="none" stroke="#cfcfcf" strokeWidth="1.500" />

    <g clipPath="url(#shClip)">
      <path d="M850 200H1150V362H850z" fill="url(#arcG)" />
      <g filter="url(#b1)" fill="none">
        <Gloss r={115} a0={-85} a1={-15} cx={999.700} cy={361.300} c="#e2e0d8" w={5} o={0.9} />
        <Gloss r={115} a0={10} a1={85} cx={999.700} cy={361.300} c="#e2e0d8" w={6} o={0.9} />
        <Gloss r={125} a0={20} a1={72} cx={999.700} cy={361.300} c="#a3917a" w={9} o={0.95} />
        <Gloss r={131} a0={30} a1={85} cx={999.700} cy={361.300} c="#dccdb4" w={3} o={0.8} />
        <Gloss r={102} a0={-75} a1={75} cx={999.700} cy={361.300} c="#8e8a80" w={4} o={0.4} />
      </g>
      <g filter="url(#b05)"><Gloss r={117.300} a0={-22} a1={2} cx={999.700} cy={361.300} c="#fff" w={2.200} o={1} /></g>
      <g mask="url(#legMask)"><path d="M861 270h70v265h-70z" fill="url(#legL)" /><path d="M1068 270h70v310h-70z" fill="url(#legR)" /></g>
      <path d="M861.700 361V531H919V361z" fill="url(#legL)" /><path d="M1080 361h58v210h-58z" fill="url(#legR)" />
      <path d="M1080 400h58v170h-58z" fill="url(#shR)" mask="url(#shMask)" />
      <path d="M861 519h59v13h-59z" fill="url(#tip)" />
      <path d="M900 499h20v20h-20z" fill="#5b564c" opacity=".35" filter="url(#b3)" />
    </g>
    <g stroke="#161616" strokeWidth="1.300" fill="none">
      <path d="M861 361.300h58M1080 361.300h58M861.700 519h57.500M872 531h36" />
      <path d="M919 455.500H888.300V498.500H919M916 458.500H891.500V495.500H916M888.300 455.500l3 3M888.300 498.500l3-3" />
      <path d="M889 457h29M889 497h28" stroke="#8a8271" strokeWidth="1.800" />
    </g>
    <g clipPath="url(#disc)">
      <circle cx="1007.200" cy="711.700" r="198" fill="url(#ringS)" />
      <circle cx="1007.200" cy="711.700" r="198" fill="url(#ringT)" mask="url(#mT)" />
      <circle cx="1007.200" cy="711.700" r="198" fill="url(#ringB)" mask="url(#mB)" />
      <g filter="url(#b1)" fill="none">
        <Gloss r={182} a0={22} a1={56} cx={1007.200} cy={711.700} c="#f3c773" w={7} o={0.8} />
        <Gloss r={188} a0={32} a1={72} cx={1007.200} cy={711.700} c="#b58f4f" w={9} o={0.95} />
        <Gloss r={177} a0={50} a1={100} cx={1007.200} cy={711.700} c="#f3c872" w={6} o={0.9} />
        <Gloss r={184} a0={-105} a1={-50} cx={1007.200} cy={711.700} c="#edc26f" w={8} o={0.7} />
        <Gloss r={171} a0={-72} a1={-10} cx={1007.200} cy={711.700} c="#a7834a" w={5} o={0.75} />
        <Gloss r={163} a0={-68} a1={0} cx={1007.200} cy={711.700} c="#fbd484" w={6} o={0.8} />
        <Gloss r={172} a0={85} a1={145} cx={1007.200} cy={711.700} c="#dfb564" w={10} o={0.7} />
        <Gloss r={173} a0={210} a1={278} cx={1007.200} cy={711.700} c="#eac373" w={11} o={0.85} />
        <Gloss r={191} a0={70} a1={115} cx={1007.200} cy={711.700} c="#ebd088" w={7} o={0.85} />
      </g>
      <g filter="url(#b05)"><Gloss r={166.500} a0={-20} a1={1} cx={1007.200} cy={711.700} c="#fffbe6" w={2.400} o={1} /></g>
    </g>
    <circle cx="1007.200" cy="711.700" r="197.300" fill="none" stroke="#1c1a14" strokeWidth="1.300" />
    <circle cx="1007.200" cy="711.700" r="157.300" fill="url(#face)" stroke="#151208" strokeWidth="1.400" />
    <path d="M888 720V711.700A116.150 116.150 0 0 1 1120.300 711.700V720z" fill="none" stroke="#2a200c" strokeWidth="1.400" />
    <path d="M914.300 714.500V711.700A89.850 89.850 0 0 1 1094 711.700V714.500z" fill="none" stroke="#151208" strokeWidth="1.400" />
    <circle cx="1009" cy="765.500" r="18.700" fill="#1f190c" /><circle cx="1009" cy="764.500" r="16" fill="#cda75d" />
    <path d="M1003.800 751H1017.700V775.500L1025 770Q1023 780 1017 783.500V811H1000.300V783Q995 780 993 771L1000.300 776.500V773L1006 769.500V765L1003.800 763z" fill="#231b0e" />
    <path d="M1017.700 752V775" stroke="#000" strokeWidth="1.300" />

    <ellipse cx="1850" cy="266" rx="32" ry="4" fill="#999" opacity=".35" filter="url(#b1)" />
    <path d="M1830.500 212.500h52v52h-52z" fill="url(#vc)" stroke="#8f8f8f" strokeWidth="1.200" /><path d="M1840 222h33v33h-33z" fill="#cfd4da" opacity=".6" />
    <text x="1856.700" y="244" fontSize="15" fontWeight="700" fill="#8b9096" textAnchor="middle" textLength="37" lengthAdjust="spacingAndGlyphs" fontFamily="Open Sans, sans-serif">FRONT</text>
    <path d="M1830.200 204v62" stroke="#4444dd" strokeWidth="1.800" /><path d="M1830 266h62.500" stroke="#f04848" strokeWidth="1.900" />
    <text x="1829.500" y="200.500" fontSize="15" fontWeight="600" fill="#8484ff" textAnchor="middle" textLength="8" lengthAdjust="spacingAndGlyphs" fontFamily="Open Sans, sans-serif">Z</text>
    <text x="1899.500" y="271" fontSize="15" fontWeight="600" fill="#ff8484" textAnchor="middle" textLength="8" lengthAdjust="spacingAndGlyphs" fontFamily="Open Sans, sans-serif">X</text>
    <circle cx="1894.500" cy="939" r="10" fill="#000" /><path d="M1894.500 939h10v10h-10z" fill="#000" /><path d="M1888 941.500l5.500-4.500.5 3 6-5" fill="none" stroke="#fff" strokeWidth="1.600" /><path d="M1894.500 942l5.500-3.500v3" fill="none" stroke="#fff" strokeWidth="1.300" />
  </svg>
);

const NavIcon = ({ children, className = "" }: { children: React.ReactNode; className?: string }) => (
  <svg className={`${className} shrink-0`} width="20" height="20" viewBox="0 0 20 20">{children}</svg>
);
const NavBar = () => (
  <div className="absolute left-[813px] top-[745px] flex h-[30px] w-[296px] items-center bg-[#f0f0f0] text-[#333]">
    <NavIcon className="ml-[4px]"><path d="M7.500 19V6H5L9.500.8 14 6h-2.500v13z" fill="#f4f4f4" stroke="#555" /><path d="M7 8.500Q1 9 1 11.500T9 15M12 8.500Q18 9 18 11.500T14.500 15" fill="none" stroke="#444" strokeWidth="1.200" /><path d="M7 12.500l3.500 2.500L7 17.500z" fill="#444" /></NavIcon>
    <Caret className="ml-[6px]" />
    <NavIcon className="ml-[8px]"><path d="M1 6.500h17v12.500H1z" fill="#eee" stroke="#555" strokeWidth="1.200" /><path d="M4.500 10h10v5.500h-10z" fill="#9aa0a8" stroke="#444" /><path d="M3 6V4.500L8 2v2l5-1.500V6z" fill="#555" /></NavIcon>
    <NavIcon className="ml-[13px]"><path d="M6 18.500Q4 14 1 11.500Q1 9.500 3 10.500L6 12.500 3.500 4.500Q4.500 3 5.500 4.500L8 9.500 7.500 2Q8.800.5 9.600 2L10.500 9 12 2Q13.500 1 14 2.500L13 10 16.500 5Q18 4.500 18 6L15 13.500Q15 16 14 18.500z" fill="#fff" stroke="#444" strokeWidth="1.100" /></NavIcon>
    <NavIcon className="ml-[11px]"><path d="M12.500 12.500L18 18.500" stroke="#333" strokeWidth="3" /><circle cx="8" cy="7.500" r="6.600" fill="#e6f3f3" stroke="#6d6d6d" strokeWidth="1.300" /><path d="M15 3.500h5M17.500 1v5M15 7.500h5" stroke="#333" strokeWidth="1.100" /></NavIcon>
    <NavIcon className="ml-[12px]"><path d="M.6 1h18.500v17.500H.6z" fill="none" stroke="#888" strokeDasharray="3 2" /><path d="M13 12.500L18.500 18.500" stroke="#333" strokeWidth="3" /><circle cx="8.500" cy="7.500" r="6.600" fill="#e6f3f3" stroke="#6d6d6d" strokeWidth="1.300" /></NavIcon>
    <Caret className="ml-[6px]" />
    <NavIcon className="ml-[8px]"><path d="M.8 1h18v13.500H.8z" fill="#eee" stroke="#666" strokeWidth="1.200" /><path d="M3 3h13.700v9H3z" fill="#86aee0" stroke="#4a6ea0" /><path d="M8 15h4v2h2.500v2h-9v-2H8z" fill="#888" /></NavIcon>
    <Caret className="ml-[4px]" />
    <NavIcon className="ml-[8px]"><path d="M1 2h18v17H1z" fill="#eef0f2" /><path d="M1 13h18v6H1z" fill="#b7bcc4" /><path d="M1 2h18v17H1zM1 5.400h18M1 8.800h18M1 12.200h18M1 15.600h18M4.600 2v17M8.200 2v17M11.800 2v17M15.400 2v17" fill="none" stroke="#444" strokeWidth=".9" /></NavIcon>
    <Caret className="ml-[4px]" />
    <NavIcon className="ml-[8px]"><path d="M.8 2.500h18v15H.8z" fill="#dde6f3" stroke="#33475f" strokeWidth="1.300" /><path d="M2.500 4h6.500v5H2.500zM10.800 4h6.500v5h-6.500zM2.500 11h6.500v5H2.500zM10.800 11h6.500v5h-6.500z" fill="#7ea3d6" stroke="#48688f" strokeWidth=".8" /></NavIcon>
    <Caret className="ml-[3px]" />
  </div>
);

const tl = "SSSEFFSESSSEESSSSCFFSEFRRMSEVSESE";
const tlIcons: Record<string, React.ReactNode> = {
  S: (<><g transform="scale(.48)"><Sk s="#a2a2a2" c="#1b8ae5" w={2.400} /></g><path d="M11 17l5.500-5 2.500 2.500-5.500 5z" fill="#fbbf45" /><path d="M16.500 12l1.500-1.500 2 2.500-1.500 1.500z" fill="#f03e4b" /><path d="M10.500 19.500l1-2.500 2 2z" fill="#555" /></>),
  E: (<><path d="M.3 17h12l3-3v3l-3 2.800H.3z" fill="#9a9a9a" /><Box x={0.500} y={0.500} w={11.500} h={13} d={3.500} c="blue" /><path d="M17.500 16V3" stroke="#444" /><path d="M16 3.500L17.500 1 19 3.500z" fill="#333" /></>),
  F: (<g transform="scale(.49)" strokeWidth="2">{icons.fillet}</g>),
  C: (<><path d="M4 12L15 7" stroke="#67aee4" strokeWidth="8" strokeLinecap="round" /><path d="M4 9.500L15 4.800" stroke="#87c8fb" strokeWidth="2.400" /><ellipse cx="4" cy="12.300" rx="3" ry="3.600" fill="#3c84bd" /><circle cx="4" cy="12.500" r="1.400" fill="#87c8fb" /></>),
  R: (<><path d="M.3.3h19v19h-9V10h-10z" fill="#67aee4" stroke="#4f9bd6" strokeWidth=".6" /><path d="M.5 10h9.500v9.400H.5z" fill="#fff" stroke="#aaa" /></>),
  M: (<><path d="M1.500 12L11 2.500Q15 1 16.500 5V8L8 18z" fill="#56c67e" /><circle cx="4.800" cy="14.800" r="4.200" fill="#fff" stroke="#2fa55b" strokeWidth="1.200" /><path d="M10.500 8l9-7.500v11.500l-9 8z" fill="#e0915f" fillOpacity=".8" /></>),
  V: (<g transform="scale(.49)">{icons.move}</g>),
};

const Timeline = () => (
  <footer className="flex h-[61px] shrink-0 border-t border-[#c8c8c8] bg-[#f1f1f1]">
    <div className="flex w-[183px] items-center pb-px pl-[13px]">
      <svg width="15" height="16" viewBox="0 0 15 16"><path d="M0 .5h2.600v15H0zM14.500 1.500v13L3 8z" fill="#555" /></svg>
      <svg className="ml-[17px]" width="17" height="16" viewBox="0 0 17 16"><path d="M12 1.500v13L0 8zM13 5h2.500v6H13z" fill="#555" /></svg>
      <svg className="ml-[14px]" width="16" height="18" viewBox="0 0 16 18"><path d="M0 0v18L15.500 9z" fill="#555" /></svg>
      <svg className="ml-[14px]" width="17" height="16" viewBox="0 0 17 16"><path d="M4.500 1.500v13L16.500 8zM0 5h2.500v6H0z" fill="#555" /></svg>
      <svg className="ml-[15px]" width="15" height="16" viewBox="0 0 15 16"><path d="M14.500.5h-2.600v15h2.600zM0 1.500v13L11.500 8z" fill="#555" /></svg>
    </div>
    <div className="flex w-[990px] pt-[19px]">
      {tl.split("").map((k, i) => (
        <div key={i} className="flex w-[30px] flex-col">
          <svg width="20" height="20" viewBox="0 0 20 20">{tlIcons[k]}</svg>
          <svg className="mt-[4px]" width="30" height="8" viewBox="0 0 30 8">
            <path d={i === 0 ? "M10 6H30V8H10z" : i === tl.length - 1 ? "M0 6H10.500V8H0z" : "M0 6H30V8H0z"} fill="#cacaca" />
            <path d={i === 0 ? "M10 0h2v8h-2z" : i === tl.length - 1 ? "M8 0h2.500v8H8z" : "M8 0h3v8H8z"} fill="#cacaca" />
          </svg>
        </div>
      ))}
    </div>
    <svg className="-ml-[13px] mt-[11px]" width="15" height="40" viewBox="0 0 15 40"><path d="M0 0h15v6l-5 4.500V40H6V10.500L0 6z" fill="#5e5e5e" /></svg>
    <div className="ml-auto flex items-center pr-[17px]"><Gear size={18} c="#777" /></div>
  </footer>
);

export default function App() {
  return (
    <div className="flex h-[1019px] w-[1919px] flex-col overflow-hidden bg-[#f1f1f1] font-['Liberation_Sans',Arial,sans-serif]">
      <TitleBar />
      <DocBar />
      <Ribbon />
      <main className="relative mt-[2px] h-[783px] shrink-0 overflow-hidden">
        <Scene />
        <Browser />
        <div className="absolute left-[5px] top-[746px] flex h-[31px] w-[374px] items-center border-b-2 border-l border-r-2 border-[#c6c6c6] bg-[#f1f1f1] pl-[30px] pr-[12px] pt-[2px] text-[13.700px] text-[#555]">
          COMMENTS
          <svg className="ml-auto" width="12" height="12"><circle cx="6" cy="6" r="5.800" fill="#2b2b2b" /><path d="M3 6h6M6 3v6" stroke="#fff" strokeWidth="1.600" /></svg>
        </div>
        <NavBar />
      </main>
      <Timeline />
    </div>
  );
}
